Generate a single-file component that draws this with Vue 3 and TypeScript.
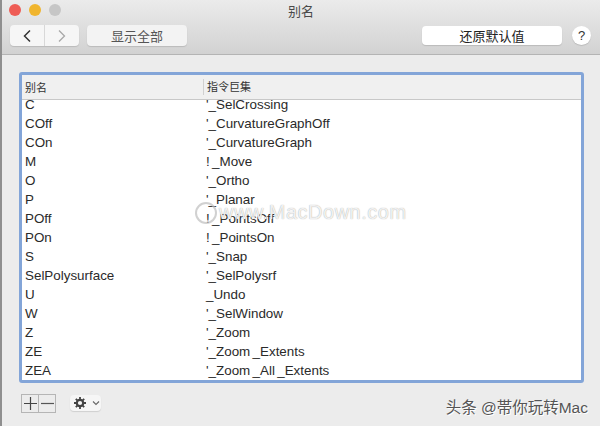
<script setup lang="ts">
const rows: [string, string][] = [
  ['C', "'_SelCrossing"],
  ['COff', "'_CurvatureGraphOff"],
  ['COn', "'_CurvatureGraph"],
  ['M', '! _Move'],
  ['O', "'_Ortho"],
  ['P', "'_Planar"],
  ['POff', '! _PointsOff'],
  ['POn', '! _PointsOn'],
  ['S', "'_Snap"],
  ['SelPolysurface', "'_SelPolysrf"],
  ['U', '_Undo'],
  ['W', "'_SelWindow"],
  ['Z', "'_Zoom"],
  ['ZE', "'_Zoom _Extents"],
  ['ZEA', "'_Zoom _All _Extents"],
]
</script>

<template>
  <div class="window">
    <header class="titlebar">
      <div class="title-row">
        <div class="lights">
          <span class="light red"></span>
          <span class="light yellow"></span>
          <span class="light grey"></span>
        </div>
        <div class="title">别名</div>
      </div>
      <div class="toolbar">
        <div class="nav">
          <button class="nav-btn">
            <svg width="10" height="14" viewBox="0 0 10 14"><path d="M8 1.500 2.500 7 8 12.500" fill="none" stroke="#333" stroke-width="1.500" /></svg>
          </button>
          <button class="nav-btn">
            <svg width="10" height="14" viewBox="0 0 10 14"><path d="M2 1.500 7.500 7 2 12.500" fill="none" stroke="#a8a8a8" stroke-width="1.300" /></svg>
          </button>
        </div>
        <button class="btn show-all">显示全部</button>
        <div class="spacer"></div>
        <button class="btn restore">还原默认值</button>
        <button class="help">?</button>
      </div>
    </header>

    <main class="content">
      <section class="table">
        <div class="thead">
          <div class="th col-a">别名</div>
          <div class="th col-b">指令巨集</div>
        </div>
        <div class="tbody">
          <div class="rows">
            <div v-for="r in rows" :key="r[0]" class="row">
              <div class="col-a">{{ r[0] }}</div>
              <div class="col-b">{{ r[1] }}</div>
            </div>
          </div>
        </div>
      </section>

      <div class="bottom">
        <div class="plusminus">
          <span class="pm">
            <svg width="13" height="13" viewBox="0 0 13 13"><path d="M6.500 0v13M0 6.500h13" stroke="#444" stroke-width="1.200" /></svg>
          </span>
          <span class="pm">
            <svg width="13" height="13" viewBox="0 0 13 13"><path d="M0 6.500h13" stroke="#555" stroke-width="1.200" /></svg>
          </span>
        </div>
        <div class="gear">
          <svg width="12" height="12" viewBox="0 0 12 12">
            <circle cx="6" cy="6" r="3.200" fill="none" stroke="#444" stroke-width="2.200" />
            <path d="M6 0v2.500M6 9.500V12M0 6h2.500M9.500 6H12M1.800 1.800l1.800 1.800M8.400 8.400l1.800 1.800M1.800 10.200l1.800-1.800M8.400 3.600l1.800-1.800" stroke="#444" stroke-width="1.800" />
          </svg>
          <svg width="8" height="6" viewBox="0 0 8 6"><path d="M1 1.500 4 4.500 7 1.500" fill="none" stroke="#666" stroke-width="1.100" /></svg>
        </div>
        <div class="credit">头条 @帯你玩转Mac</div>
      </div>
    </main>

    <div class="watermark">
      <span class="wm-circle"></span>
      <span class="wm-text">www.MacDown.com</span>
    </div>
  </div>
</template>

<style>
html, body { margin: 0; background: #ececec; }
</style>

<style scoped>
.window {
  position: relative;
  width: 600px;
  height: 426px;
  overflow: hidden;
  box-sizing: border-box;
  border-left: 2px solid #8f8f8f;
  background: #ececec;
  font-family: "Liberation Sans", "Noto Sans CJK SC", sans-serif;
  color: #2a2a2a;
}
.titlebar {
  height: 55px;
  box-sizing: border-box;
  border-bottom: 1px solid #b4b4b4;
  background: linear-gradient(#ebebeb, #d2d2d2);
}
.title-row {
  height: 25px;
  position: relative;
  display: flex;
  align-items: center;
  justify-content: center;
}
.lights {
  position: absolute;
  left: 7px;
  top: 4px;
  display: flex;
  gap: 8px;
}
.light {
  width: 12px;
  height: 12px;
  border-radius: 50%;
}
.red { background: #ee5c55; }
.yellow { background: #f0b52e; }
.grey { background: #c6c6c6; }
.title {
  font-size: 13px;
  color: #4a4a4a;
  margin-top: -5px;
}
.toolbar {
  display: flex;
  align-items: center;
  padding: 0 9px 0 8px;
  height: 21px;
}
.nav {
  display: flex;
  width: 69px;
  height: 21px;
  background: #f6f6f6;
  border-radius: 4px;
  box-shadow: 0 1px 1px #bbb;
}
.nav-btn {
  flex: 1;
  padding: 0;
  border: 0;
  background: transparent;
  display: flex;
  align-items: center;
  justify-content: center;
}
.nav-btn + .nav-btn { border-left: 1px solid #d8d8d8; }
.btn {
  padding: 0;
  border: 0;
  border-radius: 4px;
  font: 13px "Liberation Sans", "Noto Sans CJK SC", sans-serif;
  box-shadow: 0 1px 1px #bbb;
}
.show-all {
  width: 100px;
  height: 21px;
  margin-left: 8px;
  background: #f3f3f3;
  color: #555;
}
.spacer { flex: 1; }
.restore {
  width: 140px;
  height: 19px;
  background: #fff;
  color: #222;
}
.help {
  width: 19px;
  height: 19px;
  margin-left: 10px;
  padding: 0;
  border: 0;
  border-radius: 50%;
  background: #fff;
  font: 13px "Liberation Sans", sans-serif;
  color: #333;
  box-shadow: 0 1px 1px #bbb;
}
.content { padding: 17px 16px 0 17px; }
.table {
  height: 311px;
  box-sizing: border-box;
  border: 3px solid #83a5d8;
  border-radius: 3px;
  background: #fff;
  display: flex;
  flex-direction: column;
  overflow: hidden;
}
.thead {
  flex: none;
  height: 25px;
  box-sizing: border-box;
  display: flex;
  align-items: center;
  background: #f0f0f0;
  border-bottom: 1px solid #c8c8c8;
  font-size: 11px;
  color: #333;
}
.col-a { width: 181px; padding-left: 3px; box-sizing: border-box; flex: none; }
.col-b { flex: 1; padding-left: 3px; }
.th.col-b { border-left: 1px solid #d0d0d0; line-height: 16px; }
.tbody { flex: 1; overflow: hidden; }
.rows { margin-top: -5px; }
.row {
  display: flex;
  height: 19px;
  line-height: 19px;
  font-size: 13.4px;
  word-spacing: -1.400px;
  color: #2a2a2a;
}
.bottom {
  position: relative;
  display: flex;
  align-items: center;
  height: 20px;
  margin-top: 10px;
  padding-left: 2px;
}
.plusminus {
  display: flex;
  border: 1px solid #b5b5b5;
  height: 17px;
}
.pm {
  width: 16px;
  display: flex;
  align-items: center;
  justify-content: center;
}
.pm + .pm { border-left: 1px solid #b5b5b5; }
.gear {
  margin-left: 14px;
  width: 31px;
  height: 16px;
  display: flex;
  align-items: center;
  justify-content: center;
  gap: 6px;
  padding-left: 3px;
  box-sizing: border-box;
  background: #f6f6f6;
  border-radius: 4px;
  box-shadow: 0 1px 1px #d0d0d0;
}
.credit {
  position: absolute;
  right: -4px;
  top: 2px;
  font-size: 15.500px;
  color: #555;
  text-shadow: 1px 1px 0 #fff;
}
.watermark {
  position: absolute;
  left: 193px;
  top: 201px;
  display: flex;
  align-items: center;
  gap: 2px;
  pointer-events: none;
}
.wm-circle {
  width: 22px;
  height: 22px;
  box-sizing: border-box;
  border: 2px solid rgba(190, 190, 190, 0.7);
  border-radius: 50%;
}
.wm-text {
  font-size: 20px;
  color: rgba(255, 255, 255, 0.85);
  text-shadow: 0 0 1px #999;
  letter-spacing: 0.5px;
}
</style>
